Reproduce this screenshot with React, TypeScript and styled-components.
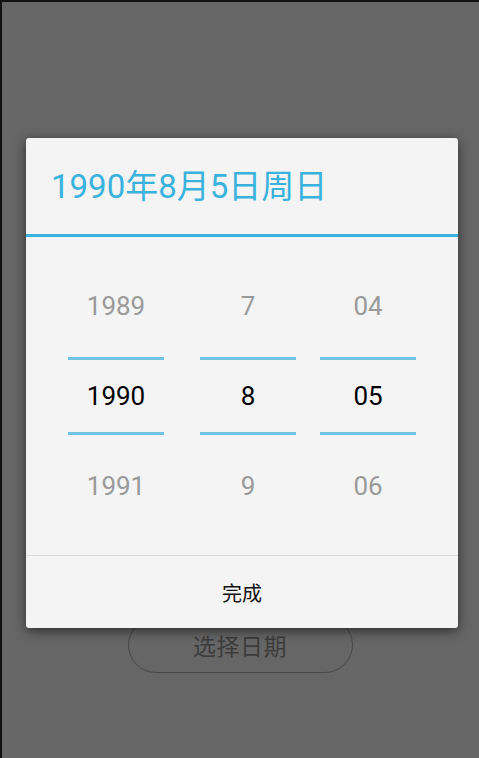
import React from "react";
import styled, { createGlobalStyle } from "styled-components";

const Global = createGlobalStyle`
  html, body { margin: 0; padding: 0; background: #666666; }
  body { font-family: Roboto, "Noto Sans CJK SC", sans-serif; }
  * { box-sizing: border-box; }
`;

const Screen = styled.div`
  position: relative;
  width: 479px;
  height: 758px;
  background: #666666;
  border-top: 2px solid #111111;
  border-left: 2px solid #111111;
  display: flex;
  flex-direction: column;
  align-items: center;
  padding-top: 615px;
  overflow: hidden;
`;

const PillButton = styled.div`
  width: 225px;
  height: 56px;
  margin-left: -1px;
  border: 1px solid #474747;
  border-radius: 28px;
  display: flex;
  align-items: center;
  justify-content: center;
  font-family: "Noto Sans CJK SC", sans-serif;
  font-size: 23px;
  color: #3c3c3c;
  letter-spacing: 0.5px;
`;

const Overlay = styled.div`
  position: absolute;
  inset: 0;
  padding: 136px 0 0 24px;
`;

const Dialog = styled.div`
  width: 432px;
  background: #f4f4f4;
  border-radius: 3px;
  box-shadow: 0 3px 12px rgba(0, 0, 0, 0.55);
  display: flex;
  flex-direction: column;
  overflow: hidden;
`;

const TitleBar = styled.div`
  height: 99px;
  padding: 29px 0 0 25px;
  border-bottom: 3px solid #38b2e0;
  font-family: Roboto, "Noto Sans CJK SC", sans-serif;
  font-size: 33px;
  color: #3ab2de;
  line-height: 40px;
`;

const Picker = styled.div`
  display: flex;
  padding: 30px 42px;
`;

const Column = styled.div<{ $offset: number }>`
  width: 96px;
  margin-left: ${(p) => p.$offset}px;
  display: flex;
  flex-direction: column;
  gap: 12px;
`;

const Cell = styled.div<{ $selected?: boolean }>`
  height: 78px;
  display: flex;
  align-items: center;
  justify-content: center;
  font-family: Roboto, sans-serif;
  font-size: 26px;
  color: ${(p) => (p.$selected ? "#000000" : "#9a9a9a")};
  border-top: 3px solid ${(p) => (p.$selected ? "#6fc3e4" : "transparent")};
  border-bottom: 3px solid ${(p) => (p.$selected ? "#6fc3e4" : "transparent")};
`;

const Footer = styled.div`
  height: 73px;
  border-top: 1px solid #dcdcdc;
  display: flex;
  align-items: center;
  justify-content: center;
  font-family: "Noto Sans CJK SC", sans-serif;
  font-size: 20px;
  color: #111111;
  padding-top: 1px;
`;

const columns = [
  { offset: 0, items: ["1989", "1990", "1991"] },
  { offset: 36, items: ["7", "8", "9"] },
  { offset: 24, items: ["04", "05", "06"] },
];

export default function App() {
  return (
    <>
      <Global />
      <Screen>
        <PillButton>选择日期</PillButton>
        <Overlay>
          <Dialog>
            <TitleBar>1990年8月5日周日</TitleBar>
            <Picker>
              {columns.map((c, i) => (
                <Column key={i} $offset={c.offset}>
                  {c.items.map((t, j) => (
                    <Cell key={j} $selected={j === 1}>
                      {t}
                    </Cell>
                  ))}
                </Column>
              ))}
            </Picker>
            <Footer>完成</Footer>
          </Dialog>
        </Overlay>
      </Screen>
    </>
  );
}
